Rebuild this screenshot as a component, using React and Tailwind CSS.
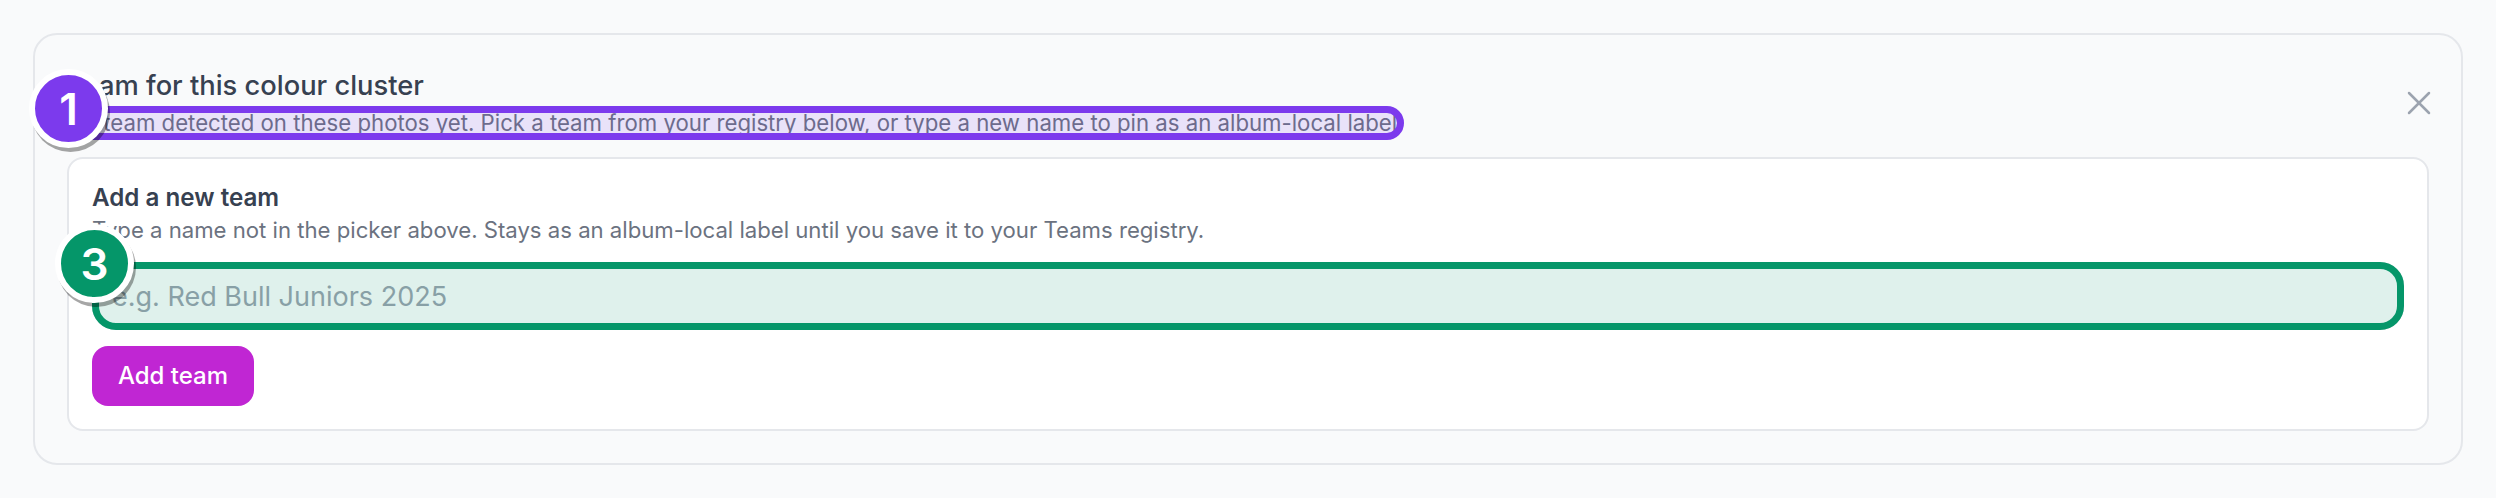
import { X } from "lucide-react";

function Badge({ n, color, className }) {
  return (
    <div
      className={`absolute z-10 flex h-[79px] w-[79px] items-center justify-center rounded-full border-[6px] border-white text-[44px] font-semibold text-white shadow-[2px_4px_0_rgba(0,0,0,0.35)] ${color} ${className}`}
    >
      {n}
    </div>
  );
}

export default function App() {
  return (
    <div className="min-h-[498px] bg-[#f9fafb] p-[33px] font-['Inter',sans-serif]">
      <div className="relative h-[432px] rounded-[24px] border-2 border-[#e5e7eb] px-[32px] pt-[31px]">
        <div className="flex items-start justify-between">
          <div>
            <h3 className="text-[27.3px] leading-[39px] font-medium text-[#374151]">Team for this colour cluster</h3>
            <div className="relative mt-[3px] inline-block">
              <p className="text-[22.2px] leading-[30px] text-[#6b7280]">
                No team detected on these photos yet. Pick a team from your registry below, or type a new name to pin as an album-local label
              </p>
              <div className="absolute -inset-x-[7px] -inset-y-[2px] rounded-[17px] border-[7px] border-[#7c3aed] bg-[#7c3aed]/12" />
            </div>
          </div>
          <button className="mt-[17px] -mr-[10px] text-[#9ca3af]">
            <X size={40} strokeWidth={1.5} />
          </button>
        </div>

        <div className="mt-[19px] h-[274px] rounded-[16px] border-2 border-[#e5e7eb] bg-white px-[23px] pt-[22px]">
          <h4 className="text-[24.2px] leading-[34px] font-semibold text-[#374151]">Add a new team</h4>
          <p className="text-[22.15px] leading-[31px] text-[#6b7280]">
            Type a name not in the picker above. Stays as an album-local label until you save it to your Teams registry.
          </p>
          <div className="relative mt-[16px]">
            <input
              readOnly
              placeholder="e.g. Red Bull Juniors 2025"
              className="h-[68px] w-full rounded-[24px] border-2 border-[#d1d5db] px-[18px] text-[27px] text-[#374151] outline-none placeholder:text-[#9ca3af]"
            />
            <div className="absolute inset-0 rounded-[24px] border-[7px] border-[#059669] bg-[#059669]/13" />
          </div>
          <button className="mt-[16px] h-[60px] w-[162px] rounded-[16px] bg-[#c026d3] text-[24px] font-medium text-white">
            Add team
          </button>
        </div>

        <Badge n="1" color="bg-[#7c3aed]" className="left-[-6px] top-[34px]" />
        <Badge n="3" color="bg-[#059669]" className="left-[20px] top-[189px]" />
      </div>
    </div>
  );
}
